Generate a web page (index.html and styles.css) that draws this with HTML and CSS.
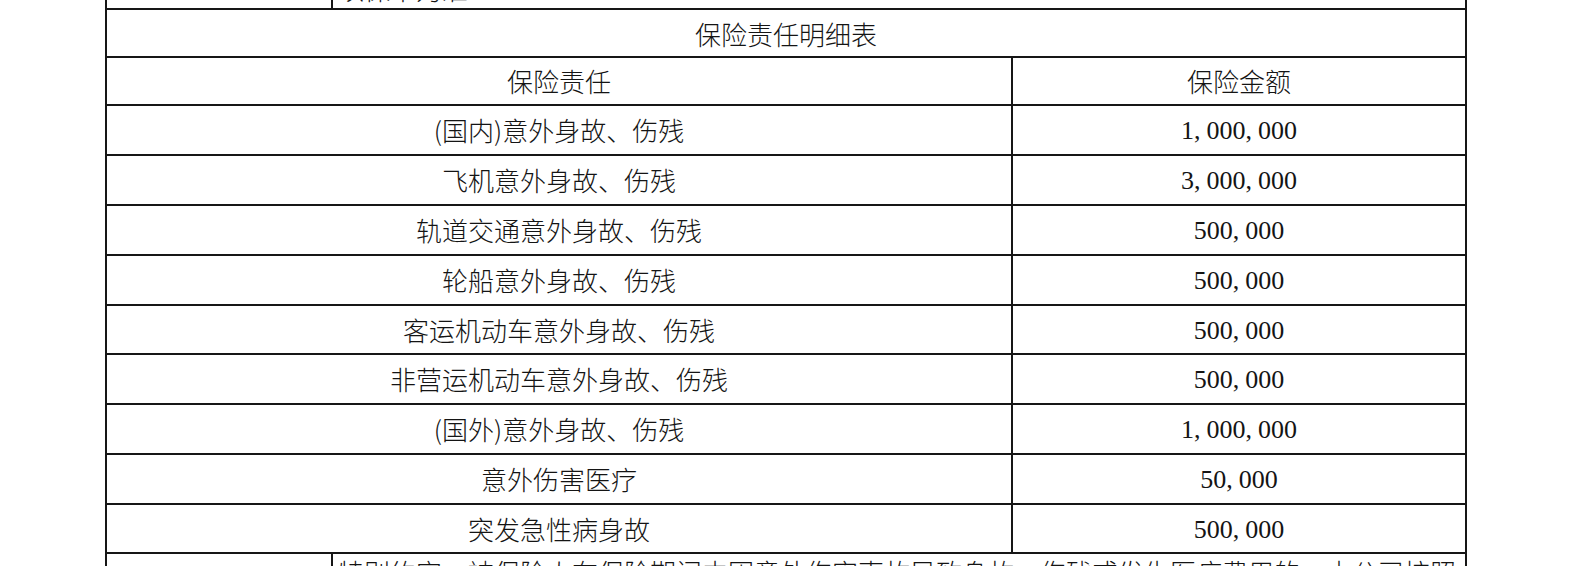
FILE: index.html
```html
<!DOCTYPE html>
<html lang="zh-CN">
<head>
<meta charset="utf-8">
<title>保险责任明细表</title>
<link rel="stylesheet" href="styles.css">
</head>
<body>
<div class="sheet">
  <div class="row split top">
    <div class="cell"></div>
    <div class="cell left">以保单为准</div>
  </div>
  <div class="row full title">
    <div class="cell">保险责任明细表</div>
  </div>
  <div class="row pair head">
    <div class="cell">保险责任</div>
    <div class="cell">保险金额</div>
  </div>
  <div class="row pair">
    <div class="cell">(国内)意外身故、伤残</div>
    <div class="cell num">1<span class="sep">,</span>000<span class="sep">,</span>000</div>
  </div>
  <div class="row pair">
    <div class="cell">飞机意外身故、伤残</div>
    <div class="cell num">3<span class="sep">,</span>000<span class="sep">,</span>000</div>
  </div>
  <div class="row pair">
    <div class="cell">轨道交通意外身故、伤残</div>
    <div class="cell num">500<span class="sep">,</span>000</div>
  </div>
  <div class="row pair">
    <div class="cell">轮船意外身故、伤残</div>
    <div class="cell num">500<span class="sep">,</span>000</div>
  </div>
  <div class="row pair short">
    <div class="cell">客运机动车意外身故、伤残</div>
    <div class="cell num">500<span class="sep">,</span>000</div>
  </div>
  <div class="row pair">
    <div class="cell">非营运机动车意外身故、伤残</div>
    <div class="cell num">500<span class="sep">,</span>000</div>
  </div>
  <div class="row pair">
    <div class="cell">(国外)意外身故、伤残</div>
    <div class="cell num">1<span class="sep">,</span>000<span class="sep">,</span>000</div>
  </div>
  <div class="row pair">
    <div class="cell">意外伤害医疗</div>
    <div class="cell num">50<span class="sep">,</span>000</div>
  </div>
  <div class="row pair short">
    <div class="cell">突发急性病身故</div>
    <div class="cell num">500<span class="sep">,</span>000</div>
  </div>
  <div class="row split bottom">
    <div class="cell"></div>
    <div class="cell left">特别约定：被保险人在保险期间内因意外伤害事故导致身故、伤残或发生医疗费用的，本公司按照合同约定给付保险金。</div>
  </div>
</div>
</body>
</html>
```

FILE: styles.css
```css
html, body {
  margin: 0;
  padding: 0;
  background: #ffffff;
  overflow: hidden;
}

body {
  width: 1580px;
  height: 566px;
  font-family: "Noto Sans CJK SC", "Noto Sans", sans-serif;
  font-weight: 300;
  color: #141414;
}

.sheet {
  margin-top: -40px;
  margin-left: 105px;
  width: 1362px;
  border-left: 2px solid #161616;
  box-sizing: border-box;
}

.row {
  display: grid;
  box-sizing: border-box;
  height: 50px;
  border-bottom: 2px solid #161616;
}

.row.full {
  grid-template-columns: 1fr;
  height: 48px;
}

.row.pair {
  grid-template-columns: 906px 454px;
}

.row.head {
  height: 48px;
}

.row.short {
  height: 49px;
}

.row.split {
  grid-template-columns: 226px 1134px;
}

.cell {
  display: flex;
  align-items: center;
  justify-content: center;
  border-right: 2px solid #161616;
  font-size: 26px;
  line-height: 1;
  white-space: nowrap;
  overflow: hidden;
}

.full .cell {
  padding-top: 1px;
}

.cell.left {
  justify-content: flex-start;
  padding-left: 5px;
}

.top .cell {
  align-items: flex-end;
  padding-bottom: 6px;
}

.bottom {
  height: 40px;
  border-bottom: none;
}

.bottom .cell {
  align-items: flex-start;
  padding-top: 5px;
}

.num {
  font-family: "Liberation Serif", "Times New Roman", serif;
  font-weight: 400;
  font-size: 26px;
  padding-top: 2px;
}

.sep {
  margin-right: 6px;
}
```
